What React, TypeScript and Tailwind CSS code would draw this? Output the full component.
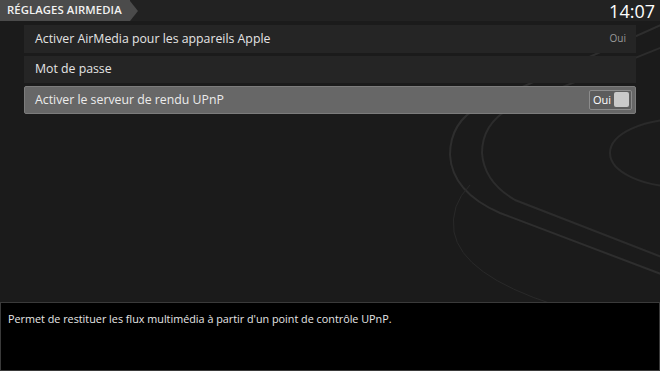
import React from 'react';

const font = { fontFamily: '"Open Sans", "Liberation Sans", sans-serif' };

function Row({ label, value, selected }: { label: string; value?: string; selected?: boolean }) {
  if (selected) {
    return (
      <div className="flex h-[27.5px] items-center justify-between rounded-[2px] border border-[#7c7c7c] bg-[#676767] pl-[10px] pr-[3px]">
        <span className="text-[12.3px] text-[#ececec]">{label}</span>
        <div className="flex h-[20px] items-center gap-[3px] rounded-[2px] border border-[#8c8c8c] bg-[#5c5c5c] pl-[3px] pr-[2px]">
          <span className="text-[11px] leading-none text-white">{value}</span>
          <div className="h-[15px] w-[15px] rounded-[2px] bg-[#c9c9c9]" />
        </div>
      </div>
    );
  }
  return (
    <div className="flex h-[27.5px] items-center justify-between bg-[#252525] pl-[11px] pr-[10px]">
      <span className="text-[12.3px] text-[#e4e4e4]">{label}</span>
      {value && <span className="text-[10px] text-[#9a9a9a]">{value}</span>}
    </div>
  );
}

export default function App() {
  return (
    <div className="flex h-[371px] w-[660px] flex-col overflow-hidden bg-[#1a1a1a]" style={font}>
      {/* Header */}
      <div className="flex h-[21px] shrink-0 items-center justify-between bg-[#222222]">
        <div className="flex h-full items-center">
          <div className="flex h-full items-center bg-[#4b4b4b] pl-[7px] pr-[8px]">
            <span className="text-[11.3px] font-semibold tracking-[0.1px] text-[#f2f2f2]">RÉGLAGES AIRMEDIA</span>
          </div>
          <div className="h-0 w-0 border-y-[10.5px] border-l-[8px] border-y-transparent border-l-[#4b4b4b]" />
        </div>
        <span className="pr-[5px] text-[18px] font-medium leading-none text-white">14:07</span>
      </div>

      {/* Main */}
      <div className="relative flex-1 bg-[#1b1b1b]">
        <svg className="absolute inset-0" width="660" height="281" viewBox="0 21 660 281" fill="none">
          <path d="M690 12 L480 106 Q450 122 450 155 Q452 192 500 213 L690 285" stroke="#2e2e2e" strokeWidth="2" />
          <path d="M690 36 L510 108 Q482 124 482 153 Q484 182 515 200 L690 268" stroke="#2c2c2c" strokeWidth="2" />
          <path d="M470 185 Q450 205 454 232 Q462 275 555 305" stroke="#292929" strokeWidth="1" />
          <ellipse cx="682" cy="153" rx="72" ry="34" stroke="#2a2a2a" strokeWidth="2" />
        </svg>
        <div className="relative flex flex-col gap-[3px] pl-[24px] pr-[24px] pt-[4px]">
          <Row label="Activer AirMedia pour les appareils Apple" value="Oui" />
          <Row label="Mot de passe" />
          <Row label="Activer le serveur de rendu UPnP" value="Oui" selected />
        </div>
      </div>

      {/* Help panel */}
      <div className="h-[69px] shrink-0 border border-[#3a3a3a] bg-black px-[7px] pt-[8px]">
        <p className="text-[10.8px] text-[#e6e6e6]">
          Permet de restituer les flux multimédia à partir d'un point de contrôle UPnP.
        </p>
      </div>
    </div>
  );
}
